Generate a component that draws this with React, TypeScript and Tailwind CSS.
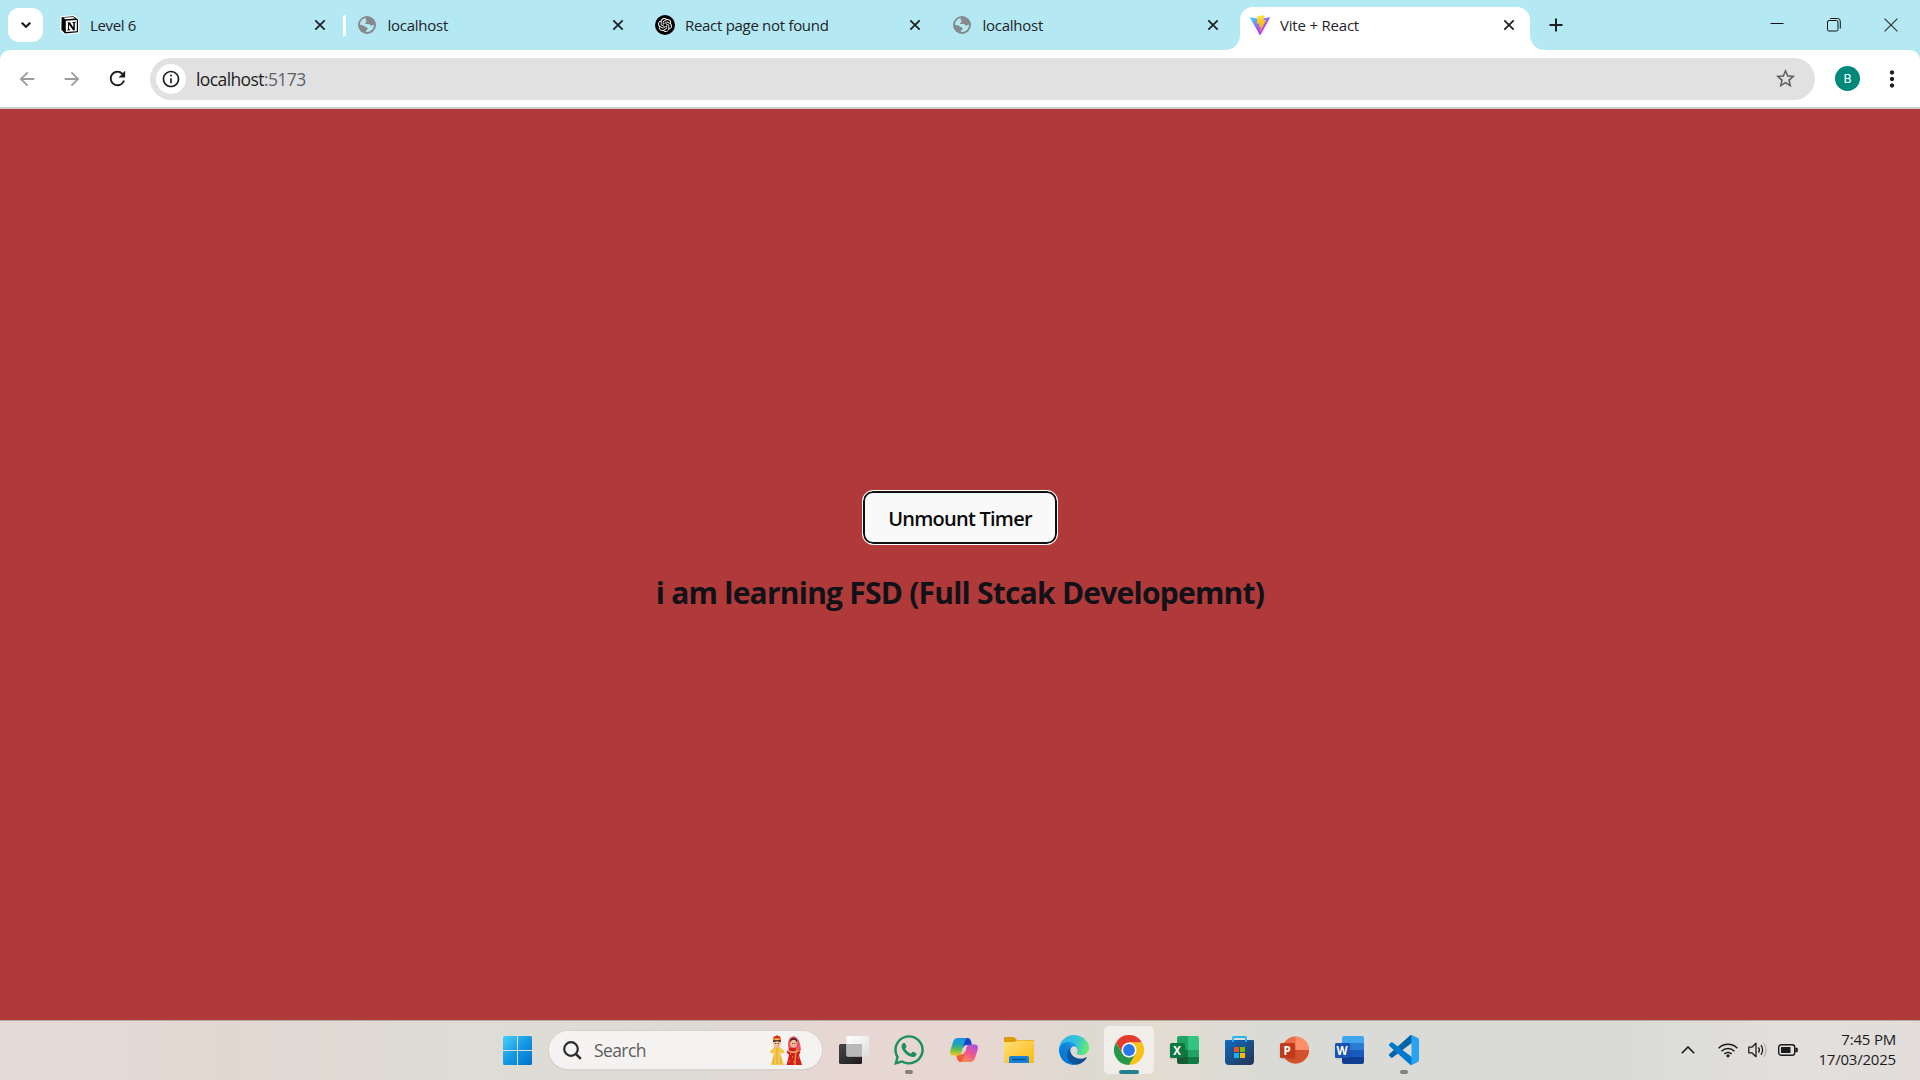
import React from "react";
import { MdRefresh, MdArrowBack, MdArrowForward, MdStarBorder, MdInfoOutline, MdMoreVert } from "react-icons/md";
import { SiOpenai } from "react-icons/si";
import { FaWhatsapp } from "react-icons/fa";

const ui = "font-['Open_Sans','Noto_Sans',sans-serif]";

function Cross({ className = "" }: { className?: string }) {
  return (
    <svg viewBox="0 0 12 12" className={`h-3 w-3 shrink-0 ${className}`} fill="none" stroke="#1f2328" strokeWidth="1.8">
      <path d="M1.3 1.3 10.7 10.7M10.7 1.3 1.3 10.7" />
    </svg>
  );
}

function Notion() {
  return (
    <svg viewBox="0 0 20 20" className="h-5 w-5">
      <path d="M1 1.8 13.5.6 18.6 4.2V18L4.6 19.2.8 15.4Z" fill="#fff" stroke="#fff" />
      <path d="M1.6 2.2 13.3 1.2 18 4.4V17.3L5 18.5 1.4 14.8Z" fill="#000" />
      <path d="M3.2 2.8 12.8 2 15.2 3.6 5.4 4.3Z" fill="#fff" />
      <path d="M5.8 5.8 16.8 5.1V16.2L5.8 17Z" fill="#fff" />
      <path d="M7.2 7.5 10 7.3 13.3 12.4V7.9L12.3 7.7V7L15.8 6.8V7.5L14.8 7.9V15.2L13.2 15.4 9.1 9.4V14.3L10.3 14.5V15.2L7.2 15.4V14.7L8 14.3V8.3Z" fill="#000" />
    </svg>
  );
}

function Globe() {
  return (
    <svg viewBox="0 0 18 18" className="mr-0.5 h-[18px] w-[18px]">
      <circle cx="9" cy="9" r="9" fill="#868a8c" />
      <path d="M2 8.8C2 5.2 4.6 2.5 7.7 2c.1 1-.4 1.9.5 2.5 1 .6.1 1.600-.7 2-.8.5-.4 1.5.5 1.5h3c.9 0 .8 1.5 1.7 1.6.9.1 2.3-.9 3.3-.8 0 3.8-2.8 7-6.6 7.200-1 0-1.600-.2-1.600-.8 0-1.400 1.900-.9 1.900-2.500 0-1.400-1.400-1.700-2.800-2.300C5.200 9.600 4.400 8.800 2 8.800Z" fill="#b4e8f3" />
    </svg>
  );
}

function Vite() {
  return (
    <svg viewBox="0 0 256 257" className="h-5 w-5">
      <defs>
        <linearGradient id="va" x1="-.8%" x2="57.6%" y1="7.7%" y2="78.4%">
          <stop offset="0" stopColor="#41D1FF" />
          <stop offset="1" stopColor="#BD34FE" />
        </linearGradient>
        <linearGradient id="vb" x1="43.4%" x2="50.3%" y1="2.2%" y2="89%">
          <stop offset="0" stopColor="#FFEA83" />
          <stop offset=".083" stopColor="#FFDD35" />
          <stop offset="1" stopColor="#FFA800" />
        </linearGradient>
      </defs>
      <path fill="url(#va)" d="M255.153 37.938L134.897 252.976c-2.483 4.44-8.862 4.466-11.382.048L.875 37.958c-2.746-4.814 1.371-10.646 6.827-9.67l120.385 21.517a6.537 6.537 0 0 0 2.322-.004l117.867-21.483c5.438-.991 9.574 4.796 6.877 9.62Z" />
      <path fill="url(#vb)" d="M185.432.063L96.44 17.501a3.268 3.268 0 0 0-2.634 3.014l-5.474 92.456a3.268 3.268 0 0 0 3.997 3.378l24.777-5.718c2.318-.535 4.413 1.507 3.936 3.838l-7.361 36.047c-.495 2.426 1.782 4.5 4.151 3.78l15.304-4.649c2.372-.72 4.652 1.36 4.15 3.788l-11.698 56.621c-.732 3.542 3.979 5.473 5.943 2.437l1.313-2.028l72.516-144.72c1.215-2.423-.88-5.186-3.54-4.672l-25.505 4.922c-2.396.462-4.435-1.77-3.759-4.114l16.646-57.705c.677-2.35-1.37-4.583-3.769-4.113Z" />
    </svg>
  );
}

function Tab({ icon, title, titleClass }: { icon: React.ReactNode; title: string; titleClass: string }) {
  return (
    <div className="flex h-full w-[297.5px] shrink-0 items-center pl-[14.5px] pr-[17px]">
      <div className="flex w-5 shrink-0 items-center justify-center">{icon}</div>
      <span className={`ml-2.5 whitespace-nowrap text-[15px] text-[#1f2328] ${titleClass}`}>{title}</span>
      <Cross className="ml-auto" />
    </div>
  );
}

function TabStrip() {
  return (
    <div className="flex h-[50px] items-stretch bg-[#b4e8f3]">
      <div className="flex w-[45.5px] shrink-0 items-center pl-2">
        <div className="flex h-[34px] w-[35px] items-center justify-center rounded-[11px] bg-white">
          <svg viewBox="0 0 10 6" className="h-1.5 w-2.5" fill="none" stroke="#1f1f1f" strokeWidth="2.2">
            <path d="M.7.7 5 4.800 9.300.7" />
          </svg>
        </div>
      </div>
      <Tab icon={<Notion />} title="Level 6" titleClass="tracking-[-0.35px]" />
      <div className="-ml-[0.5px] -mr-[2.5px] h-[21px] w-[3px] shrink-0 self-center rounded-full bg-white" />
      <Tab icon={<Globe />} title="localhost" titleClass="tracking-[-0.25px]" />
      <Tab
        icon={
          <div className="flex h-5 w-5 items-center justify-center rounded-full bg-black">
            <SiOpenai className="h-3.5 w-3.5 text-white" />
          </div>
        }
        title="React page not found"
        titleClass="tracking-[-0.3px]"
      />
      <Tab icon={<Globe />} title="localhost" titleClass="tracking-[-0.25px]" />
      <div className="flex w-[313px] shrink-0 items-end pl-[2.5px]">
        <svg viewBox="0 0 15 15" className="-ml-[13px] h-[15px] w-[15px] shrink-0 fill-white">
          <path d="M15 0V15H0C8 15 15 9 15 0Z" />
        </svg>
        <div className="flex h-[43px] w-[290px] shrink-0 items-center rounded-t-[13px] bg-white pb-[7px] pl-[10px] pr-[15px]">
          <Vite />
          <span className="ml-2.5 whitespace-nowrap text-[15px] tracking-[-0.2px] text-[#1f2328]">Vite + React</span>
          <Cross className="ml-auto" />
        </div>
        <svg viewBox="0 0 15 15" className="h-[15px] w-[15px] shrink-0 fill-white">
          <path d="M0 0V15H15C7 15 0 9 0 0Z" />
        </svg>
      </div>
      <svg viewBox="0 0 14 14" className="h-3.5 w-3.5 shrink-0 self-center" stroke="#1f1f1f" strokeWidth="2">
        <path d="M7 .5V13.500M.5 7H13.500" />
      </svg>
      <div className="ml-auto mr-[22px] flex items-center gap-[43px]">
        <svg viewBox="0 0 14 14" className="h-3.5 w-3.5" stroke="#111" strokeWidth="1">
          <path d="M.5 5.500H13.500" />
        </svg>
        <svg viewBox="0 0 14 14" className="h-3.5 w-3.5" fill="none" stroke="#111" strokeWidth="1">
          <rect x=".5" y="2.500" width="10.500" height="10.500" rx="1.500" />
          <path d="M3 .5H10.500A2.800 2.800 0 0 1 13.300 3.300V10.500" />
        </svg>
        <svg viewBox="0 0 14 14" className="h-3.5 w-3.5" fill="none" stroke="#333" strokeWidth="1.200">
          <path d="M.6.6 13.400 13.400M13.400.6.6 13.400" />
        </svg>
      </div>
    </div>
  );
}

function Toolbar() {
  return (
    <div className="h-[59px] bg-[#b4e8f3]">
      <div className="flex h-[59px] items-center rounded-t-[10px] border-b-2 border-[#c8cacb] bg-white">
        <MdArrowBack className="ml-[16px] h-[22px] w-[22px] text-[#9a9c9e]" />
        <MdArrowForward className="ml-[23px] h-[22px] w-[22px] text-[#9a9c9e]" />
        <MdRefresh className="ml-[23px] h-[23px] w-[23px] text-[#1f1f1f]" />
        <div className="ml-[21px] flex h-[42px] w-[1665px] items-center rounded-full bg-[#e1e1e1] pl-1.5 pr-[18px]">
          <div className="flex h-[30px] w-[30px] items-center justify-center rounded-full bg-white">
            <MdInfoOutline className="h-5 w-5 text-[#1f1f1f]" />
          </div>
          <span className="ml-[10px] pt-0.5 text-[17.5px] tracking-[-0.6px] text-[#1f1f1f]">
            localhost<span className="text-[#5f6368]">:5173</span>
          </span>
          <MdStarBorder className="ml-auto h-[23px] w-[23px] text-[#5c5e60]" />
        </div>
        <div className="ml-5 flex h-[25px] w-[25px] items-center justify-center rounded-full bg-[#00897b] font-['Roboto',sans-serif] text-[13px] text-white">
          B
        </div>
        <MdMoreVert className="ml-[19px] h-[26px] w-[26px] text-[#1f1f1f]" />
      </div>
    </div>
  );
}

function StartLogo() {
  return (
    <svg viewBox="0 0 29 29" className="h-[29px] w-[29px]">
      <defs>
        <linearGradient id="st" x1="0" y1="0" x2="1" y2="1">
          <stop offset="0" stopColor="#4cd0fb" />
          <stop offset=".5" stopColor="#1498e4" />
          <stop offset="1" stopColor="#0070cc" />
        </linearGradient>
      </defs>
      <path fill="url(#st)" d="M1.500 0H14V14H0V1.500Q0 0 1.500 0ZM15 0H27.500Q29 0 29 1.500V14H15ZM0 15H14V29H1.500Q0 29 0 27.500ZM15 15H29V27.500Q29 29 27.500 29H15Z" />
    </svg>
  );
}

function Couple() {
  return (
    <svg viewBox="0 0 32 31" className="h-[31px] w-8">
      <path d="M4.500 10H9.500V13H4.500Z" fill="#e3a67c" />
      <path d="M3 4.500Q3 1 6 1L7 0 8 1Q11 1 11 4.500V6H3Z" fill="#d9261c" />
      <path d="M3 4H11" stroke="#f3b71b" strokeWidth="1.200" />
      <ellipse cx="7" cy="8" rx="3.600" ry="4" fill="#f2bd94" />
      <path d="M3.200 5.200H10.800L10.500 7.500Q7 5 3.500 7.500Z" fill="#2a1a16" />
      <path d="M5.300 8.500H6.200M7.800 8.500H8.700" stroke="#3b221a" />
      <path d="M4 12.500H10L14 15.500 14.500 18 11 18.500 10 17.500 14 30H1L4 17.500 3 18.500 0 18 .5 15.500Z" fill="#f0c94e" />
      <path d="M7 13V29M4 22L3 29M10 22L11 29" stroke="#d9a52a" strokeWidth=".8" />
      <path d="M18.500 14Q16.500 1.500 24 1.200 30 2 31 15L28 17H21Z" fill="#ec5468" />
      <ellipse cx="23.500" cy="8.200" rx="3.300" ry="4.200" fill="#f2bd94" />
      <path d="M20 7.500Q20 3 23.500 3 27 3 27.200 7.500Q25.500 4.500 23.500 4.500 21.500 4.500 20 7.500Z" fill="#2a1a16" />
      <path d="M22 8.500H22.900M24.400 8.500H25.300" stroke="#3b221a" />
      <path d="M20 13H27L30.500 17 29 20 32 30H16.500L19 20 16.500 17Z" fill="#cf1f1f" />
      <path d="M18 15.500Q23 19 29 15.500" stroke="#f2bd94" strokeWidth="1.300" fill="none" />
      <path d="M27 13Q25 20 25 30" stroke="#f0981f" strokeWidth="1.400" fill="none" />
      <path d="M20 19h1m1 3h1m-4 4h1m8-3h1m-6 4h1" stroke="#f5b52c" strokeWidth="1.200" />
    </svg>
  );
}

function TaskView() {
  return (
    <svg viewBox="0 0 30 30" className="h-[30px] w-[30px]">
      <defs>
        <linearGradient id="tv" x1="0" y1="0" x2="1" y2="1">
          <stop offset="0" stopColor="#454545" />
          <stop offset="1" stopColor="#1d1d1d" />
        </linearGradient>
        <linearGradient id="tw" x1="0" y1="0" x2="1" y2="1">
          <stop offset="0" stopColor="#fff" />
          <stop offset="1" stopColor="#dedede" />
        </linearGradient>
      </defs>
      <rect x="0" y="9" width="23" height="20" rx="1.500" fill="url(#tv)" />
      <rect x="7.500" y="1" width="22.500" height="20.500" rx="1.500" fill="url(#tw)" />
      <path d="M7.500 9H23V21.500H9Q7.500 21.500 7.500 20Z" fill="#b9b9b9" />
    </svg>
  );
}

function Whatsapp() {
  return <FaWhatsapp className="h-[34px] w-[34px] text-[#1f8f5b]" />;
}

function Copilot() {
  return (
    <svg viewBox="0 0 28 26" className="h-[26px] w-7">
      <defs>
        <linearGradient id="c1" x1=".3" y1="0" x2=".2" y2="1">
          <stop offset="0" stopColor="#1d8fe8" />
          <stop offset=".35" stopColor="#21a6b8" />
          <stop offset=".65" stopColor="#62bd4f" />
          <stop offset="1" stopColor="#f6c91c" />
        </linearGradient>
        <linearGradient id="c2" x1=".8" y1="0" x2=".3" y2="1">
          <stop offset="0" stopColor="#a455e6" />
          <stop offset=".5" stopColor="#ec5594" />
          <stop offset="1" stopColor="#fb8a50" />
        </linearGradient>
      </defs>
      <path d="M13 1H18Q20 1 20.800 3.500L22 8H17Q14 8 13 11Z" fill="#1744c8" />
      <path d="M15 25H10Q8 25 7.200 22L6 17.500H11Q14 17.500 15 14Z" fill="#f25c35" />
      <path d="M8 1H17Q15.500 1.500 14.500 5L11.500 15.500Q10.800 18.500 8 18.500H3Q-1 18.500.5 13L3 5Q4.200 1 8 1Z" fill="url(#c1)" />
      <path d="M20 25H11Q12.500 24.500 13.500 21L16.500 10.500Q17.200 7.500 20 7.500H25Q29 7.500 27.500 13L25 21Q23.800 25 20 25Z" fill="url(#c2)" />
    </svg>
  );
}

function Folder() {
  return (
    <svg viewBox="0 0 30 28" className="h-7 w-[30px]">
      <defs>
        <linearGradient id="fo" x1="0" y1="0" x2="1" y2="1">
          <stop offset="0" stopColor="#ffe07a" />
          <stop offset="1" stopColor="#fbb90f" />
        </linearGradient>
      </defs>
      <path d="M0 2Q0 1 1 1H9Q10 1 11 2L13 4H29Q30 4 30 5V10H0Z" fill="#dd9a05" />
      <path d="M0 7Q0 6 1 6H10L13 4.500H29Q30 4.500 30 5.500V26Q30 27 29 27H1Q0 27 0 26Z" fill="url(#fo)" />
      <path d="M5 27V22Q5 20 7 20H23Q25 20 25 22V27Z" fill="#1583d8" />
      <path d="M8.500 23.500H21.500" stroke="#0b4f93" strokeWidth="1.300" strokeLinecap="round" />
    </svg>
  );
}

function Edge() {
  return (
    <svg viewBox="0 0 256 256" className="h-[30px] w-[30px]">
      <defs>
        <linearGradient id="e1" x1="63" y1="178" x2="241" y2="178" gradientUnits="userSpaceOnUse">
          <stop offset="0" stopColor="#0c59a4" />
          <stop offset="1" stopColor="#114a8b" />
        </linearGradient>
        <linearGradient id="e2" x1="157" y1="100" x2="46" y2="221" gradientUnits="userSpaceOnUse">
          <stop offset="0" stopColor="#1b9de2" />
          <stop offset=".5" stopColor="#0f80d8" />
          <stop offset="1" stopColor="#0078d7" />
        </linearGradient>
        <linearGradient id="e3" x1="20" y1="50" x2="240" y2="120" gradientUnits="userSpaceOnUse">
          <stop offset="0" stopColor="#35b5ea" />
          <stop offset=".5" stopColor="#2fc2df" />
          <stop offset="1" stopColor="#66eb6e" />
        </linearGradient>
      </defs>
      <path fill="url(#e1)" d="M231 190.500c-3.400 1.800-6.900 3.400-10.500 4.700a101.900 101.900 0 0 1-35.900 6.500c-47.300 0-88.500-32.500-88.500-74.300a31.500 31.500 0 0 1 16.400-27.300c-42.800 1.800-53.800 46.400-53.800 72.500 0 73.900 68.100 81.400 82.800 81.400 7.900 0 19.800-2.300 27-4.600l1.300-.4a128.300 128.300 0 0 0 66.600-52.800 4 4 0 0 0-5.400-5.700Z" />
      <path fill="url(#e2)" d="M105.700 241.400a79.200 79.200 0 0 1-22.700-21.300 80.700 80.700 0 0 1 29.500-120c3.200-1.500 8.500-4.100 15.600-4a32.400 32.400 0 0 1 25.700 13 31.900 31.900 0 0 1 6.300 18.700c0-.2 24.500-79.600-80-79.600-43.900 0-80 41.700-80 78.200a130.200 130.200 0 0 0 12.100 56 128 128 0 0 0 156.400 67 75.500 75.500 0 0 1-62.800-8Z" />
      <path fill="url(#e3)" d="M152.300 148.900c-.8 1-3.300 2.500-3.300 5.700 0 2.600 1.700 5.100 4.700 7.200 14.400 10 41.500 8.700 41.500 8.700a59.600 59.600 0 0 0 30.300-8.400A61.400 61.400 0 0 0 256 109.200c.3-22.400-8-37.300-11.300-43.900C223.500 23.900 177.700 0 128 0A128 128 0 0 0 0 126.200c.5-36.500 36.800-66 80-66 3.500 0 23.500.3 42 10.100a72.600 72.600 0 0 1 30.900 29.300c6.100 10.600 7.200 24.100 7.200 29.500s-2.700 13.300-7.800 19.800Z" />
    </svg>
  );
}

function Chrome() {
  return (
    <svg viewBox="0 0 48 48" className="h-[30px] w-[30px]">
      <path d="M24 12H44.800A24 24 0 0 0 3.200 12L13.600 30Z" fill="#e33b2e" />
      <path d="M34.400 30 24 48A24 24 0 0 0 44.800 12H24Z" fill="#fbc116" />
      <path d="M13.600 30 3.200 12A24 24 0 0 0 24 48L34.400 30Z" fill="#279847" />
      <circle cx="24" cy="24" r="12" fill="#fff" />
      <circle cx="24" cy="24" r="9.500" fill="#2878ec" />
    </svg>
  );
}

function Letter({ children, className }: { children: string; className: string }) {
  return (
    <span className={`absolute left-0 top-[7px] flex h-[15px] w-[15px] items-center justify-center rounded-[1.500px] font-['Open_Sans',sans-serif] text-[11.500px] font-bold leading-none text-white shadow-sm ${className}`}>
      {children}
    </span>
  );
}

function Excel() {
  return (
    <div className="relative h-7 w-[29px]">
      <div className="ml-[7px] grid h-7 w-[22px] grid-cols-2 grid-rows-4 overflow-hidden rounded-[2px]">
        <i className="bg-[#21a366]" />
        <i className="bg-[#33c481]" />
        <i className="bg-[#21a366]" />
        <i className="bg-[#33c481]" />
        <i className="bg-[#107c41]" />
        <i className="bg-[#21a366]" />
        <i className="bg-[#185c37]" />
        <i className="bg-[#107c41]" />
      </div>
      <Letter className="bg-[#0f7640]">X</Letter>
    </div>
  );
}

function Word() {
  return (
    <div className="relative h-7 w-[29px]">
      <div className="ml-[7px] grid h-7 w-[22px] grid-rows-4 overflow-hidden rounded-[2px]">
        <i className="bg-[#41a5ee]" />
        <i className="bg-[#2b7cd3]" />
        <i className="bg-[#185abd]" />
        <i className="bg-[#103f91]" />
      </div>
      <Letter className="bg-[#1853b5]">W</Letter>
    </div>
  );
}

function Powerpoint() {
  return (
    <div className="relative h-7 w-[29px]">
      <svg viewBox="0 0 29 28" className="h-7 w-[29px]">
        <circle cx="15.500" cy="14" r="13.500" fill="#ed6c47" />
        <path d="M15.500.5A13.500 13.500 0 0 1 29 14H15.500Z" fill="#ff8f6b" />
        <path d="M2 14H29A13.500 13.500 0 0 1 2 14Z" fill="#d35230" />
      </svg>
      <Letter className="bg-[#c13b1b]">P</Letter>
    </div>
  );
}

function Store() {
  return (
    <svg viewBox="0 0 29 29" className="h-[29px] w-[29px]">
      <defs>
        <linearGradient id="ms" x1="0" y1="0" x2="1" y2="1">
          <stop offset="0" stopColor="#0f6cc0" />
          <stop offset="1" stopColor="#253352" />
        </linearGradient>
      </defs>
      <path d="M0 5Q0 4 1 4H28Q29 4 29 5V25Q29 29 25 29H4Q0 29 0 25Z" fill="url(#ms)" />
      <path d="M8 6V1.800Q8 1 8.800 1H20.200Q21 1 21 1.800V6" fill="none" stroke="#26b4f4" strokeWidth="1.800" />
      <path d="M9 11H14V16H9Z" fill="#f25022" />
      <path d="M15 11H20V16H15Z" fill="#7fba00" />
      <path d="M9 17H14V22H9Z" fill="#1eb0f0" />
      <path d="M15 17H20V22H15Z" fill="#ffb900" />
    </svg>
  );
}

function VSCode() {
  return (
    <svg viewBox="0 0 100 100" className="h-[30px] w-[30px]">
      <path fill="#0065a9" d="M96.500 10.800 75.900.9a6.200 6.200 0 0 0-7.100 1.200L1.300 63.600a4.200 4.200 0 0 0 0 6.200l5.500 5a4.200 4.200 0 0 0 5.300.2L93.400 13.400A4.100 4.100 0 0 1 100 16.600V16.400a6.200 6.200 0 0 0-3.500-5.600Z" />
      <path fill="#007acc" d="M96.500 89.200 75.900 99.100a6.200 6.200 0 0 1-7.100-1.200L1.300 36.400a4.200 4.200 0 0 1 0-6.200l5.500-5a4.200 4.200 0 0 1 5.300-.2L93.400 86.600a4.100 4.100 0 0 0 6.600-3.200V83.600a6.200 6.200 0 0 1-3.500 5.600Z" />
      <path fill="#27a4f2" d="M75.900 99.100a6.200 6.200 0 0 1-7.100-1.200A3.700 3.700 0 0 0 75 95.300V4.700A3.700 3.700 0 0 0 68.800 2.100 6.200 6.200 0 0 1 75.900.9L96.500 10.800A6.200 6.200 0 0 1 100 16.400V83.600a6.200 6.200 0 0 1-3.500 5.600Z" />
    </svg>
  );
}

const apps = [
  { name: "tasks", icon: <TaskView /> },
  { name: "whatsapp", icon: <Whatsapp />, running: true },
  { name: "copilot", icon: <Copilot /> },
  { name: "files", icon: <Folder /> },
  { name: "edge", icon: <Edge /> },
  { name: "chrome", icon: <Chrome />, active: true },
  { name: "excel", icon: <Excel /> },
  { name: "store", icon: <Store /> },
  { name: "powerpoint", icon: <Powerpoint /> },
  { name: "word", icon: <Word /> },
  { name: "vscode", icon: <VSCode />, running: true },
];

function Taskbar() {
  return (
    <div className="flex h-[60px] items-center border-t border-[#b9aaa5] bg-[linear-gradient(90deg,#e6dad6_0%,#e2d8d2_12%,#dddcd5_24%,#dcdbd5_35%,#e6d7d2_43%,#e6d7d2_52%,#dddad1_57%,#e4dcd1_60%,#dadbd6_66%,#dadbd7_85%,#e2dfdc_93%,#e2dddb_100%)] pb-px">
      <div className="ml-[503px] flex w-[29px] shrink-0">
        <StartLogo />
      </div>
      <div className="ml-[17px] flex h-[38px] w-[273px] shrink-0 items-center rounded-full bg-[#f5f3f2] pl-[14px] pr-[20px] shadow-[0_0_0_1px_#d8d3cf,0_1px_1px_#aaa]">
        <svg viewBox="0 0 19 19" className="h-[19px] w-[19px]" fill="none" stroke="#2b2b2b" strokeWidth="2.200">
          <circle cx="8" cy="8" r="6.800" />
          <path d="M12.800 12.800 17.800 17.800" strokeWidth="2.600" />
        </svg>
        <span className="ml-[12px] pt-px text-[17.500px] tracking-[-0.6px] text-[#5d5c5b]">Search</span>
        <div className="ml-auto">
          <Couple />
        </div>
      </div>
      <div className="ml-[7px] flex gap-[5px]">
        {apps.map((a) => (
          <div
            key={a.name}
            className={`relative flex h-12 w-[50px] items-center justify-center rounded-[5px] ${a.active ? "bg-[#f1eeea] shadow-[0_0_0_1px_#e0dad4]" : ""}`}
          >
            {a.icon}
            {a.active && <div className="absolute bottom-0 h-1 w-5 rounded-full bg-[#23808f]" />}
            {a.running && <div className="absolute bottom-0 h-1 w-2 rounded-full bg-[#86807d]" />}
          </div>
        ))}
      </div>
      <div className="ml-auto mr-6 flex items-center">
        <svg viewBox="0 0 14 8" className="h-2 w-3.5" fill="none" stroke="#1b1b1b" strokeWidth="1.600">
          <path d="M.8 7.200 7 1 13.200 7.200" />
        </svg>
        <svg viewBox="0 0 20 16" className="ml-[23px] h-4 w-5" fill="none" stroke="#1b1b1b" strokeWidth="1.500">
          <path d="M.7 6.200A13.200 13.200 0 0 1 19.300 6.200M3.600 9.200A9.100 9.100 0 0 1 16.400 9.200M6.300 12A5.200 5.200 0 0 1 13.700 12" />
          <circle cx="10" cy="13.800" r="1.600" fill="#1b1b1b" stroke="none" />
        </svg>
        <svg viewBox="0 0 20 18" className="ml-2.5 h-[18px] w-5" fill="none" stroke="#1b1b1b" strokeWidth="1.300">
          <path d="M.8 6.200H3.800L8 2.300V15.700L3.800 11.800H.8Z" strokeLinejoin="round" />
          <path d="M10.500 6.300Q12.300 9 10.500 11.700M13 4.200Q16.200 9 13 13.800" />
          <path d="M15.600 2Q20.500 9 15.600 16" stroke="#b5b3b1" />
        </svg>
        <svg viewBox="0 0 20 12" className="ml-2.5 h-3 w-5" fill="none" stroke="#1b1b1b" strokeWidth="1.400">
          <rect x=".7" y=".7" width="16" height="10.600" rx="2.600" />
          <rect x="3" y="3" width="9.500" height="6" rx=".6" fill="#1b1b1b" stroke="none" />
          <path d="M18.500 3.800V8.200" strokeWidth="2.400" />
        </svg>
        <div className="ml-5 w-[78px] pb-[3px] text-right text-[15px] leading-5 tracking-[-0.2px] text-[#1b1b1b]">
          <div>7:45 PM</div>
          <div>17/03/2025</div>
        </div>
      </div>
    </div>
  );
}

export default function App() {
  return (
    <div className={`flex h-[1080px] w-[1920px] flex-col overflow-hidden ${ui}`}>
      <TabStrip />
      <Toolbar />
      <main className="flex h-[911px] flex-col items-center bg-[#b03a3a] pt-[381px]">
        <button className="flex h-[55px] w-[196px] items-center justify-center whitespace-nowrap rounded-[11px] border border-white bg-[#f9f9f9] pt-[2px] text-[20px] font-semibold tracking-[-0.75px] text-[#0a0a0a] ring-2 ring-inset ring-[#101010]">
          Unmount Timer
        </button>
        <h2 className="mt-[27px] whitespace-nowrap text-[30px] font-bold leading-[42px] tracking-[-0.77px] text-[#101218]">
          i am learning FSD (Full Stcak Developemnt)
        </h2>
      </main>
      <Taskbar />
    </div>
  );
}
